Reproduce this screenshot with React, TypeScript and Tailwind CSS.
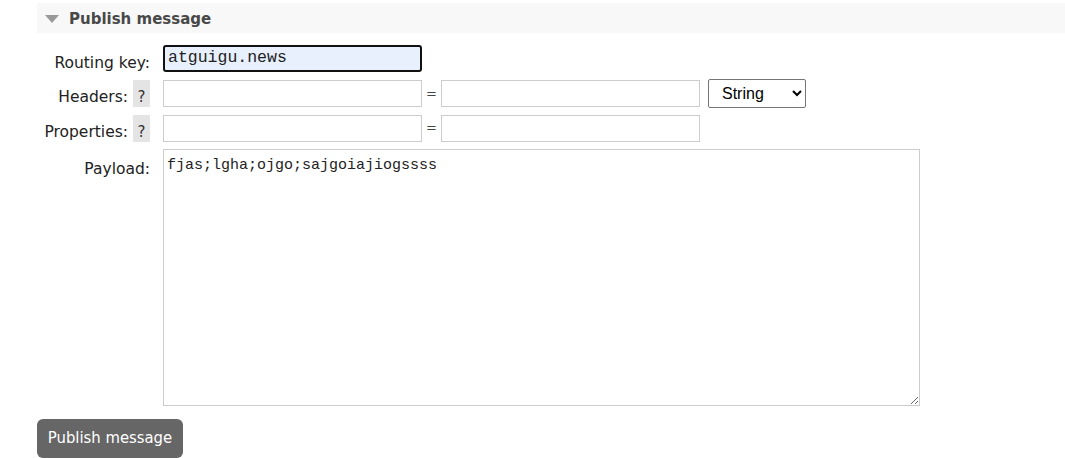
import React, { useState } from 'react'

const labelCls =
  "w-[113px] shrink-0 flex items-center justify-end gap-[5px] text-[15.5px] text-[#222] font-['DejaVu_Sans',Verdana,sans-serif]"
const inputCls =
  'h-[27px] w-[259px] border border-[#ccc] bg-white outline-none px-1'

const Help = () => (
  <span className="flex h-[27px] w-[17px] shrink-0 items-center justify-center bg-[#e4e4e4] pt-[8px] text-[15px] text-[#333]">
    ?
  </span>
)

const App = () => {
  const [key, setkey] = useState('atguigu.news')
  const [payload, setpayload] = useState('fjas;lgha;ojgo;sajgoiajiogssss')

  return (
    <div className="w-[1065px] h-[458px] bg-white pl-[37px] pt-[3px] overflow-hidden">
      <div className="flex h-[30px] items-center bg-[#f8f8f8] pl-[8px]">
        <svg width="14" height="8" viewBox="0 0 14 8" className="mt-[1px]">
          <path d="M0 0 H14 L7 8 Z" fill="#999" />
        </svg>
        <span className="ml-[10px] pt-[2px] text-[15px] font-bold text-[#484848] font-['DejaVu_Sans',Verdana,sans-serif]">
          Publish message
        </span>
      </div>

      <form onSubmit={(e) => e.preventDefault()}>
        <div className="mt-[12px] flex h-[27px] items-center">
          <label className={`${labelCls} pt-[10px]`}>Routing key:</label>
          <input
            value={key}
            onChange={(e) => setkey(e.target.value)}
            className="ml-[13px] h-[27px] w-[259px] rounded-[3px] border-2 border-[#111] bg-[#e8f0fe] px-[3px] pb-[2px] text-[16.5px] text-[#222] outline-none font-['Liberation_Mono',monospace]"
          />
        </div>

        <div className="mt-[7px] flex h-[29px] items-center">
          <label className={labelCls}>
            <span className="pt-[9px]">Headers:</span>
            <Help />
          </label>
          <input className={`ml-[13px] ${inputCls}`} />
          <span className="w-[19px] text-center text-[13px] text-[#444] font-['DejaVu_Sans',sans-serif]">=</span>
          <input className={inputCls} />
          <select className="ml-[8px] h-[29px] w-[98px] border border-[#767676] rounded-[2px] bg-white pl-[9px] text-[16px] text-black font-['Liberation_Sans',Arial,sans-serif]">
            <option>String</option>
            <option>Number</option>
          </select>
        </div>

        <div className="mt-[6px] flex h-[28px] items-center">
          <label className={labelCls}>
            <span className="pt-[9px]">Properties:</span>
            <Help />
          </label>
          <input className={`ml-[13px] ${inputCls}`} />
          <span className="w-[19px] text-center text-[13px] text-[#444] font-['DejaVu_Sans',sans-serif]">=</span>
          <input className={inputCls} />
        </div>

        <div className="mt-[7px] flex items-start">
          <label className={`${labelCls} pt-[9px]`}>Payload:</label>
          <textarea
            value={payload}
            onChange={(e) => setpayload(e.target.value)}
            className="ml-[13px] h-[257px] w-[757px] border border-[#ccc] bg-white px-[3px] py-[5px] text-[15px] text-[#222] outline-none font-['Liberation_Mono',monospace]"
          />
        </div>

        <button
          type="submit"
          className="mt-[13px] h-[39px] w-[146px] rounded-[6px] bg-[#666] text-[16.5px] text-white font-['DejaVu_Sans_Condensed','DejaVu_Sans',sans-serif]"
        >
          Publish message
        </button>
      </form>
    </div>
  )
}

export default App
